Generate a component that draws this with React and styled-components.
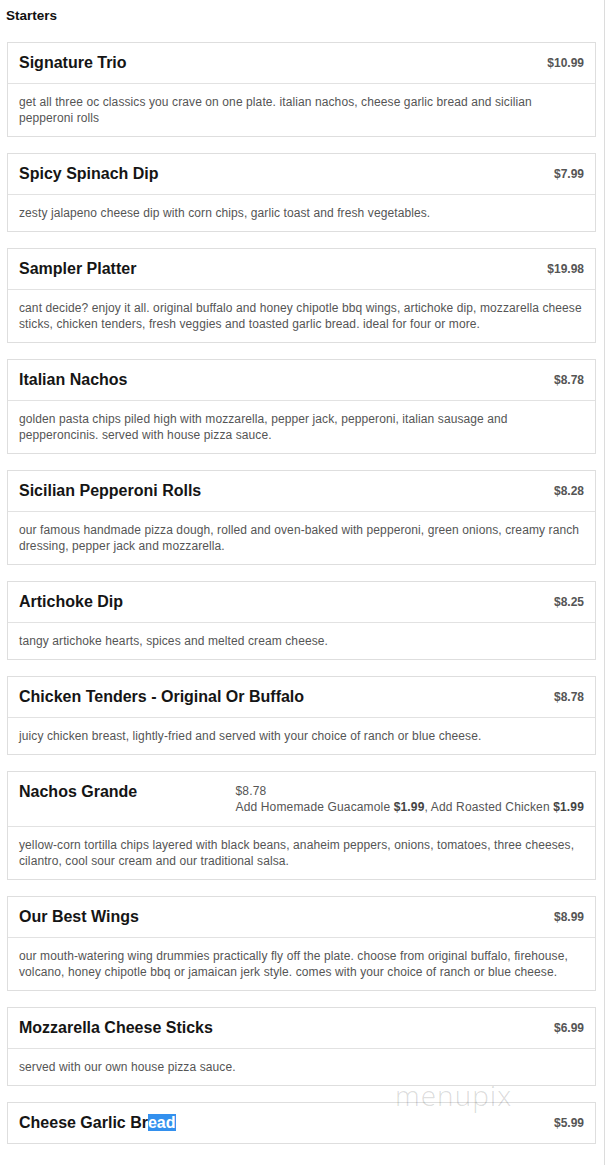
import styled, { createGlobalStyle } from "styled-components";

const GlobalStyle = createGlobalStyle`
  body {
    margin: 0;
    background: #fff;
    font-family: "Liberation Sans", Arial, sans-serif;
  }
`;

const items = [
  {
    name: "Signature Trio",
    price: "$10.99",
    desc: "get all three oc classics you crave on one plate. italian nachos, cheese garlic bread and sicilian pepperoni rolls",
  },
  {
    name: "Spicy Spinach Dip",
    price: "$7.99",
    desc: "zesty jalapeno cheese dip with corn chips, garlic toast and fresh vegetables.",
  },
  {
    name: "Sampler Platter",
    price: "$19.98",
    desc: "cant decide? enjoy it all. original buffalo and honey chipotle bbq wings, artichoke dip, mozzarella cheese sticks, chicken tenders, fresh veggies and toasted garlic bread. ideal for four or more.",
  },
  {
    name: "Italian Nachos",
    price: "$8.78",
    desc: "golden pasta chips piled high with mozzarella, pepper jack, pepperoni, italian sausage and pepperoncinis. served with house pizza sauce.",
  },
  {
    name: "Sicilian Pepperoni Rolls",
    price: "$8.28",
    desc: "our famous handmade pizza dough, rolled and oven-baked with pepperoni, green onions, creamy ranch dressing, pepper jack and mozzarella.",
  },
  {
    name: "Artichoke Dip",
    price: "$8.25",
    desc: "tangy artichoke hearts, spices and melted cream cheese.",
  },
  {
    name: "Chicken Tenders - Original Or Buffalo",
    price: "$8.78",
    desc: "juicy chicken breast, lightly-fried and served with your choice of ranch or blue cheese.",
  },
  {
    name: "Nachos Grande",
    price: "$8.78",
    addons: [
      { label: "Add Homemade Guacamole", price: "$1.99" },
      { label: "Add Roasted Chicken", price: "$1.99" },
    ],
    desc: "yellow-corn tortilla chips layered with black beans, anaheim peppers, onions, tomatoes, three cheeses, cilantro, cool sour cream and our traditional salsa.",
  },
  {
    name: "Our Best Wings",
    price: "$8.99",
    desc: "our mouth-watering wing drummies practically fly off the plate. choose from original buffalo, firehouse, volcano, honey chipotle bbq or jamaican jerk style. comes with your choice of ranch or blue cheese.",
  },
  {
    name: "Mozzarella Cheese Sticks",
    price: "$6.99",
    desc: "served with our own house pizza sauce.",
  },
  {
    name: "Cheese Garlic Br",
    selected: "ead",
    price: "$5.99",
  },
];

const App = () => {
  return (
    <Page>
      <GlobalStyle />
      <Heading>Starters</Heading>
      {items.map((item) => (
        <Card key={item.name}>
          <Header $last={!item.desc}>
            <Title>
              {item.name}
              {item.selected && <Selected>{item.selected}</Selected>}
            </Title>
            {item.addons ? (
              <PriceBlock>
                <div>{item.price}</div>
                <div>
                  {item.addons.map((a, i) => (
                    <span key={a.label}>
                      {a.label} <b>{a.price}</b>
                      {i < item.addons.length - 1 ? ", " : ""}
                    </span>
                  ))}
                </div>
              </PriceBlock>
            ) : (
              <Price>{item.price}</Price>
            )}
          </Header>
          {item.desc && <Desc>{item.desc}</Desc>}
        </Card>
      ))}
      <Watermark>menupix</Watermark>
    </Page>
  );
};

const Page = styled.div`
  position: relative;
  width: 605px;
  box-sizing: border-box;
  border-right: 1px solid #dcdcdc;
  border-bottom: 1px solid #d6d6d6;
  padding-bottom: 16px;
`;

const Heading = styled.div`
  padding: 8px 6px 0;
  margin-bottom: 18px;
  font-size: 13.5px;
  line-height: 16px;
  font-weight: bold;
  color: #111;
`;

const Card = styled.div`
  width: 589px;
  box-sizing: border-box;
  margin: 0 0 16px 7px;
  border: 1px solid #dedede;
  background: #fff;
`;

const Header = styled.div`
  display: flex;
  justify-content: space-between;
  align-items: flex-start;
  padding: 11px 11px;
  border-bottom: ${(p) => (p.$last ? "none" : "1px solid #e2e2e2")};
`;

const Title = styled.div`
  font-size: 16px;
  line-height: 18px;
  font-weight: bold;
  color: #151515;
`;

const Selected = styled.span`
  background: #3390ee;
  color: #fff;
`;

const Price = styled.div`
  font-size: 12px;
  line-height: 18px;
  font-weight: bold;
  color: #555;
`;

const PriceBlock = styled.div`
  font-size: 12px;
  line-height: 16px;
  letter-spacing: 0.15px;
  color: #555;
  text-align: left;

  b {
    color: #444;
  }
`;

const Desc = styled.div`
  padding: 10px 11px;
  font-size: 12px;
  line-height: 16px;
  letter-spacing: 0.1px;
  color: #555;
`;

const Watermark = styled.span`
  position: absolute;
  left: 395px;
  top: 1076px;
  font-family: "Open Sans", sans-serif;
  font-weight: 300;
  font-size: 28px;
  letter-spacing: 1px;
  color: rgba(0, 0, 0, 0.15);
  pointer-events: none;
`;

export default App;
